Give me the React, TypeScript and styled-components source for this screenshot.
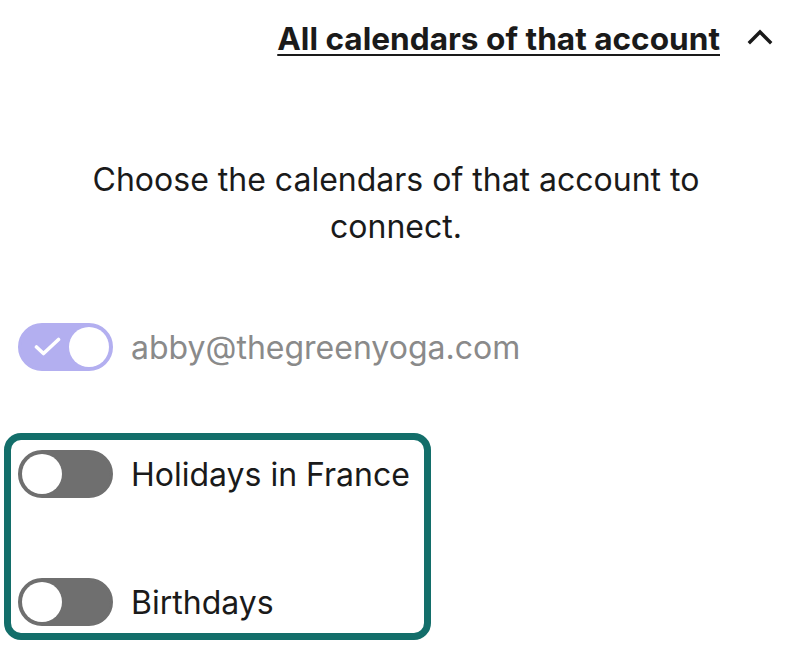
import React, { useState } from 'react';
import styled, { createGlobalStyle } from 'styled-components';

const GlobalStyle = createGlobalStyle`
  html, body {
    margin: 0;
    padding: 0;
    background: #ffffff;
  }
  body {
    font-family: Inter, "Noto Sans", sans-serif;
    color: #1a1a1a;
  }
`;

const Page = styled.div`
  width: 792px;
  height: 656px;
  overflow: hidden;
`;

const Header = styled.div`
  display: flex;
  justify-content: flex-end;
  align-items: center;
  gap: 26px;
  padding: 18px 18px 0 0;
  height: 40px;
`;

const HeaderTitle = styled.a`
  font-size: 31.6px;
  font-weight: 700;
  color: #1a1a1a;
  text-decoration: underline;
  text-underline-offset: 4px;
  text-decoration-thickness: 2px;
  cursor: pointer;
`;

const Chevron = styled.button`
  display: flex;
  align-items: center;
  justify-content: center;
  width: 28px;
  height: 28px;
  padding: 0;
  border: none;
  background: none;
  color: #1a1a1a;
  cursor: pointer;
`;

const Description = styled.p`
  margin: 98px auto 0;
  width: 680px;
  font-size: 32px;
  line-height: 47px;
  text-align: center;
  color: #1a1a1a;
`;

const AccountRow = styled.div`
  display: flex;
  align-items: center;
  gap: 18px;
  margin: 73px 0 0 18px;
`;

const CalendarBox = styled.div`
  display: flex;
  flex-direction: column;
  gap: 80px;
  box-sizing: border-box;
  width: 427px;
  margin: 62px 0 0 4px;
  padding: 10px 6px 7px 7px;
  border: 7px solid #136e6a;
  border-radius: 17px;
`;

const Row = styled.div`
  display: flex;
  align-items: center;
  gap: 18px;
`;

const Label = styled.span<{ $muted?: boolean }>`
  font-size: 32px;
  color: ${p => (p.$muted ? '#8a8a8a' : '#1a1a1a')};
`;

const Track = styled.button<{ $on: boolean; $disabled?: boolean }>`
  position: relative;
  flex: none;
  width: 95px;
  height: 48px;
  padding: 0;
  border-radius: 24px;
  border: 3px solid ${p => (p.$on ? '#b3aff0' : '#6f6f6f')};
  background: ${p => (p.$on ? '#b3aff0' : '#6f6f6f')};
  box-sizing: border-box;
  cursor: ${p => (p.$disabled ? 'default' : 'pointer')};
`;

const Knob = styled.span<{ $on: boolean }>`
  position: absolute;
  top: 1px;
  left: ${p => (p.$on ? '48px' : '1px')};
  width: 40px;
  height: 40px;
  border-radius: 50%;
  background: #ffffff;
`;

const Check = styled.svg`
  position: absolute;
  left: 13px;
  top: 11px;
`;

const Toggle: React.FC<{ on: boolean; disabled?: boolean; onChange?: () => void }> = ({ on, disabled, onChange }) => (
  <Track $on={on} $disabled={disabled} onClick={disabled ? undefined : onChange}>
    {on && (
      <Check width="27" height="20" viewBox="0 0 27 20" fill="none">
        <path d="M2.5 10 L9.5 16.5 L24.5 2.5" stroke="#ffffff" strokeWidth="3.6" strokeLinecap="round" strokeLinejoin="round" />
      </Check>
    )}
    <Knob $on={on} />
  </Track>
);

const App: React.FC = () => {
  const [holidays, setHolidays] = useState(false);
  const [birthdays, setBirthdays] = useState(false);

  return (
    <Page>
      <GlobalStyle />
      <Header>
        <HeaderTitle>All calendars of that account</HeaderTitle>
        <Chevron aria-label="Collapse">
          <svg width="28" height="28" viewBox="0 0 28 28" fill="none">
            <path d="M4 18 L14 8 L24 18" stroke="#1a1a1a" strokeWidth="3.4" strokeLinecap="square" />
          </svg>
        </Chevron>
      </Header>

      <Description>Choose the calendars of that account to connect.</Description>

      <AccountRow>
        <Toggle on disabled />
        <Label $muted>abby@thegreenyoga.com</Label>
      </AccountRow>

      <CalendarBox>
        <Row>
          <Toggle on={holidays} onChange={() => setHolidays(v => !v)} />
          <Label>Holidays in France</Label>
        </Row>
        <Row>
          <Toggle on={birthdays} onChange={() => setBirthdays(v => !v)} />
          <Label>Birthdays</Label>
        </Row>
      </CalendarBox>
    </Page>
  );
};

export default App;
